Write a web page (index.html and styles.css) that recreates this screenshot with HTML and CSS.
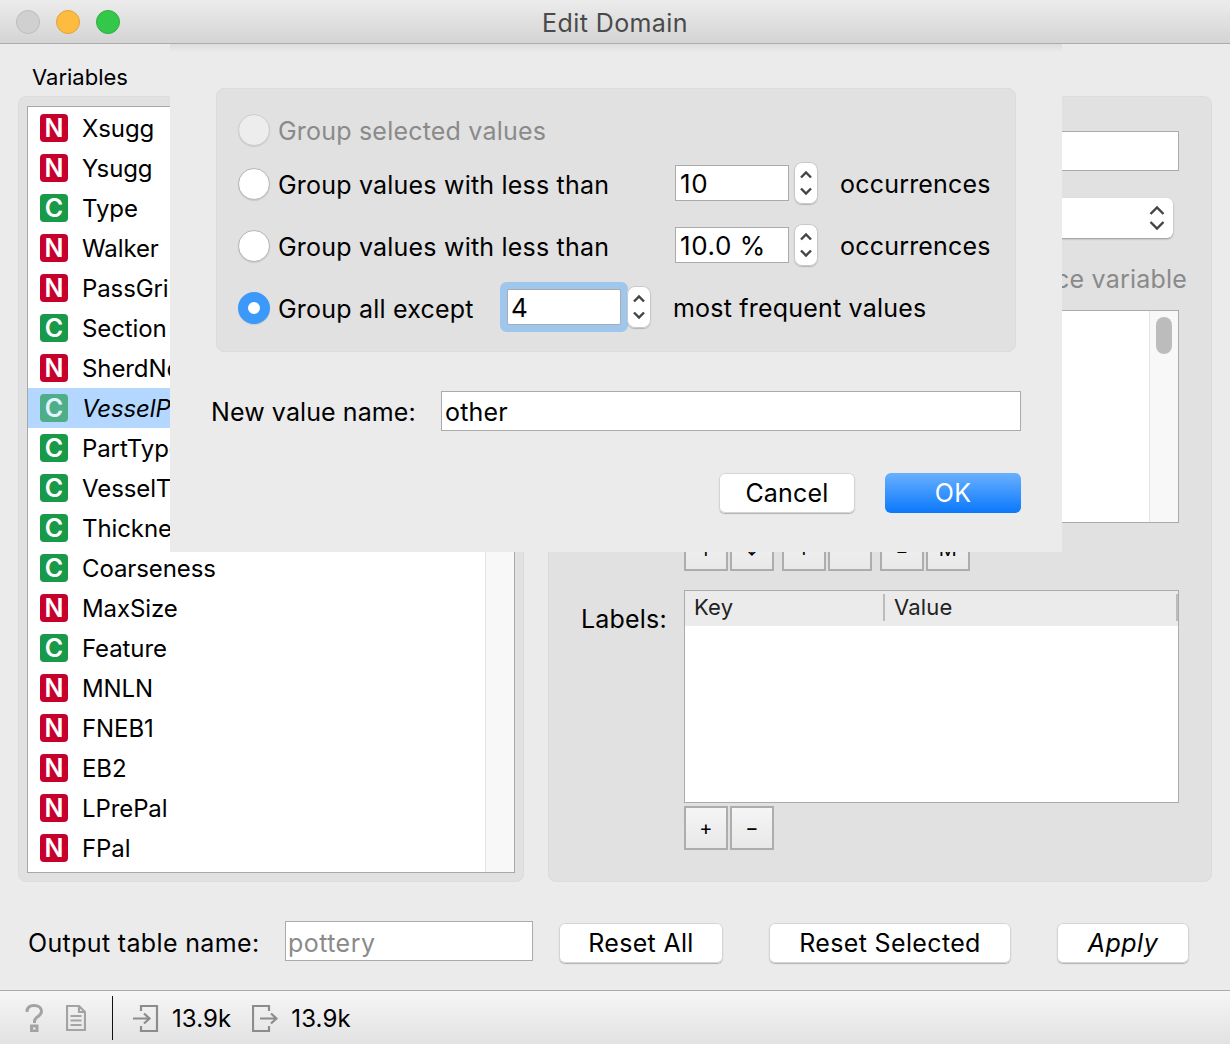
FILE: index.html
```html
<!DOCTYPE html>
<html lang="en">
<head>
  <meta charset="utf-8">
  <title>Edit Domain</title>
  <link rel="stylesheet" href="styles.css">
</head>
<body>
<div class="window">
  <div class="titlebar">
    <div class="lights">
      <span class="light light-off"></span>
      <span class="light light-min"></span>
      <span class="light light-max"></span>
    </div>
    <div class="title">Edit Domain</div>
  </div>

  <div class="main">
    <div class="col-left">
      <div class="col-title">Variables</div>
      <div class="group group-left">
        <div class="varlist">
          <div class="varrows">
            <div class="var"><span class="tag tag-n">N</span>Xsugg</div>
            <div class="var"><span class="tag tag-n">N</span>Ysugg</div>
            <div class="var"><span class="tag tag-c">C</span>Type</div>
            <div class="var"><span class="tag tag-n">N</span>Walker</div>
            <div class="var"><span class="tag tag-n">N</span>PassGrind</div>
            <div class="var"><span class="tag tag-c">C</span>Section</div>
            <div class="var"><span class="tag tag-n">N</span>SherdNo</div>
            <div class="var selected"><span class="tag tag-c">C</span>VesselPart</div>
            <div class="var"><span class="tag tag-c">C</span>PartType</div>
            <div class="var"><span class="tag tag-c">C</span>VesselType</div>
            <div class="var"><span class="tag tag-c">C</span>Thickness</div>
            <div class="var"><span class="tag tag-c">C</span>Coarseness</div>
            <div class="var"><span class="tag tag-n">N</span>MaxSize</div>
            <div class="var"><span class="tag tag-c">C</span>Feature</div>
            <div class="var"><span class="tag tag-n">N</span>MNLN</div>
            <div class="var"><span class="tag tag-n">N</span>FNEB1</div>
            <div class="var"><span class="tag tag-n">N</span>EB2</div>
            <div class="var"><span class="tag tag-n">N</span>LPrePal</div>
            <div class="var"><span class="tag tag-n">N</span>FPal</div>
          </div>
          <div class="scrolltrack"></div>
        </div>
      </div>
    </div>

    <div class="col-right">
      <div class="group group-right">
        <div class="formrow">
          <span>Name:</span>
          <div class="field field-name"></div>
        </div>
        <div class="formrow row-type">
          <span>Type:</span>
          <div class="combo">
            <svg class="combo-arrows" width="16" height="28" viewBox="0 0 16 28"><path d="M1.500 10 8 3.500l6.500 6.500M1.500 18 8 24.500l6.500-6.500"/></svg>
          </div>
        </div>
        <div class="disabled-line">Use source variable</div>
        <div class="formrow">
          <span></span>
          <div class="valuelist">
            <div class="valuelist-track"><span class="thumb"></span></div>
          </div>
        </div>
        <div class="formrow">
          <span></span>
          <div class="toolrow">
            <span class="tool">↑</span><span class="tool">↓</span>
            <span class="tool tool-gap">+</span><span class="tool"></span>
            <span class="tool tool-gap">=</span><span class="tool">M</span>
          </div>
        </div>
        <div class="formrow row-labels">
          <span class="labels-label">Labels:</span>
          <div class="labels-table">
            <div class="labels-head">
              <span class="head-key">Key</span>
              <span class="head-value">Value</span>
            </div>
          </div>
        </div>
        <div class="formrow">
          <span></span>
          <div class="toolrow toolrow-small">
            <span class="tool">+</span><span class="tool">−</span>
          </div>
        </div>
      </div>
    </div>
  </div>

  <div class="bottom">
    <span class="output-label">Output table name:</span>
    <div class="field field-output">pottery</div>
    <div class="btn btn-reset">Reset All</div>
    <div class="btn btn-selected">Reset Selected</div>
    <div class="btn btn-apply">Apply</div>
  </div>

  <div class="statusbar">
    <svg class="status-icon icon-help" width="18" height="28" viewBox="0 0 18 28"><path d="M2 8C2 3.500 5 1.500 9 1.500s7.500 2.200 7.500 5.800c0 2.500-1.500 3.800-3.500 5.200-2 1.300-3.500 2.300-3.500 5v1.500"/><rect x="6.500" y="22" width="5.500" height="5"/></svg>
    <svg class="status-icon icon-doc" width="20" height="26" viewBox="0 0 20 26"><path d="M1 1h12l6 6v18H1zM13 1v6h6M4.500 11h11M4.500 15.500h11M4.500 20h11"/></svg>
    <span class="status-sep"></span>
    <svg class="status-icon icon-in" width="26" height="28" viewBox="0 0 26 28"><path d="M8 7V2h16v25H8v-5M0 14.500h15M11 9.500l5.500 5-5.500 5"/></svg>
    <span class="status-num">13.9k</span>
    <svg class="status-icon icon-out" width="26" height="28" viewBox="0 0 26 28"><path d="M17 7V2H1v25h16v-5M8 14.500h15M19 9.500l5.500 5-5.500 5"/></svg>
    <span class="status-num">13.9k</span>
  </div>

  <div class="sheet">
    <div class="sheet-group">
      <div class="opt opt-first disabled">
        <span class="radio radio-off"></span>
        <span class="opt-label">Group selected values</span>
      </div>
      <div class="opt opt-second">
        <span class="radio"></span>
        <span class="opt-label opt-text">Group values with less than</span>
        <div class="field spinfield">10</div>
        <div class="spin"><svg width="14" height="34" viewBox="0 0 14 34"><path d="M2 11.500 7 6.500l5 5M2 22.500l5 5 5-5"/></svg></div>
        <span class="opt-tail">occurrences</span>
      </div>
      <div class="opt opt-third">
        <span class="radio"></span>
        <span class="opt-label opt-text">Group values with less than</span>
        <div class="field spinfield">10.0 %</div>
        <div class="spin"><svg width="14" height="34" viewBox="0 0 14 34"><path d="M2 11.500 7 6.500l5 5M2 22.500l5 5 5-5"/></svg></div>
        <span class="opt-tail">occurrences</span>
      </div>
      <div class="opt opt-fourth">
        <span class="radio radio-on"></span>
        <span class="opt-label opt-text-short">Group all except</span>
        <div class="field spinfield focused">4</div>
        <div class="spin spin-focused"><svg width="14" height="34" viewBox="0 0 14 34"><path d="M2 11.500 7 6.500l5 5M2 22.500l5 5 5-5"/></svg></div>
        <span class="opt-tail">most frequent values</span>
      </div>
    </div>
    <div class="newname">
      <span class="newname-label">New value name:</span>
      <div class="field field-newname">other</div>
    </div>
    <div class="sheet-buttons">
      <div class="btn btn-cancel">Cancel</div>
      <div class="btn btn-ok">OK</div>
    </div>
  </div>
</div>
</body>
</html>
```

FILE: styles.css
```css
* {
  box-sizing: border-box;
}
html, body {
  margin: 0;
  padding: 0;
}
body {
  font: 25px/1.2 Inter, "Liberation Sans", sans-serif;
  letter-spacing: .2px;
  color: #000;
  background: #ebebeb;
}
.window {
  position: relative;
  width: 1230px;
  height: 1044px;
  overflow: hidden;
  display: flex;
  flex-direction: column;
  background: #ebebeb;
}

/* title bar */
.titlebar {
  flex: none;
  height: 44px;
  display: flex;
  align-items: center;
  position: relative;
  background: linear-gradient(#ececec, #d4d4d4);
  border-bottom: 1px solid #adadad;
  border-radius: 8px 8px 0 0;
}
.lights {
  display: flex;
  gap: 16px;
  padding-left: 16px;
}
.light {
  width: 24px;
  height: 24px;
  border-radius: 50%;
  border: 1px solid #bdbdbd;
}
.light-off {
  background: #d0d0d0;
}
.light-min {
  background: #fdbc40;
  border-color: #e0a23a;
}
.light-max {
  background: #34c84a;
  border-color: #2dac40;
}
.title {
  flex: 1;
  text-align: center;
  margin-left: -120px;
  padding-top: 2px;
  letter-spacing: .4px;
  color: #4a4a4a;
}

/* main columns */
.main {
  flex: none;
  height: 838px;
  display: flex;
  gap: 24px;
  padding-left: 18px;
}
.col-left {
  width: 506px;
}
.col-title {
  height: 52px;
  padding: 20px 0 0 14px;
  font-size: 22px;
  letter-spacing: 0;
}
.group {
  background: #e1e1e1;
  border: 1px solid #dcdcdc;
  border-radius: 8px;
}
.group-left {
  height: 786px;
  padding: 9px 8px;
}
.varlist {
  display: flex;
  height: 767px;
  background: #fff;
  border: 1px solid #a8a8a8;
  overflow: hidden;
}
.varrows {
  flex: 1;
  padding-top: 1px;
}
.var {
  height: 40px;
  display: flex;
  align-items: center;
  padding: 2px 0 0 12px;
  font-size: 24px;
  letter-spacing: -.1px;
}
.var.selected {
  background: #b3d7ff;
  font-style: italic;
}
.var.selected .tag {
  opacity: .65;
  font-style: normal;
}
.tag {
  flex: none;
  width: 28px;
  height: 28px;
  margin: -2px 14px 0 0;
  border-radius: 4px;
  color: #fff;
  font-weight: 600;
  font-size: 25px;
  line-height: 28px;
  text-align: center;
}
.tag-n {
  background: #c6002b;
}
.tag-c {
  background: #19994a;
}
.scrolltrack {
  flex: none;
  width: 29px;
  background: #f8f8f8;
  border-left: 1px solid #e4e4e4;
}

/* right column */
.col-right {
  width: 664px;
  padding-top: 52px;
}
.group-right {
  height: 786px;
  padding: 34px 32px 0;
}
.formrow {
  display: grid;
  grid-template-columns: 103px 1fr;
  align-items: center;
}
.field {
  background: #fff;
  border: 1px solid #ababab;
  height: 40px;
  display: flex;
  align-items: center;
  padding: 2px 0 0 3px;
}
.field-name {
  width: 495px;
}
.row-type {
  margin-top: 27px;
}
.combo {
  width: 489px;
  height: 40px;
  background: #fff;
  border-radius: 6px;
  box-shadow: 0 1px 2px rgba(0, 0, 0, .35);
  display: flex;
  align-items: center;
  justify-content: flex-end;
  padding-right: 8px;
}
.combo-arrows path,
.spin path {
  fill: none;
  stroke: #444;
  stroke-width: 2.4;
}
.disabled-line {
  margin: 26px -8px 0 0;
  height: 30px;
  text-align: right;
  color: #8a8a8a;
}
.valuelist {
  width: 495px;
  height: 213px;
  margin-top: 16px;
  background: #fff;
  border: 1px solid #ababab;
  display: flex;
  justify-content: flex-end;
}
.valuelist-track {
  width: 29px;
  background: #f8f8f8;
  border-left: 1px solid #e4e4e4;
  padding: 6px 0 0 6px;
}
.thumb {
  display: block;
  width: 16px;
  height: 37px;
  border-radius: 8px;
  background: #bcbcbc;
}
.toolrow {
  display: flex;
  gap: 2px;
  margin-top: 4px;
}
.tool {
  width: 44px;
  height: 44px;
  display: flex;
  align-items: center;
  justify-content: center;
  border: 2px solid #adadad;
  background: linear-gradient(#f5f5f5, #e8e8e8);
  font-size: 20px;
}
.tool-gap {
  margin-left: 6px;
}
.row-labels {
  margin-top: 19px;
  align-items: start;
}
.labels-label {
  padding-top: 14px;
}
.labels-table {
  width: 495px;
  height: 213px;
  background: #fff;
  border: 1px solid #ababab;
}
.labels-head {
  height: 35px;
  display: flex;
  align-items: center;
  background: #ebebeb;
  font-size: 22px;
  color: #222;
  padding-bottom: 2px;
}
.head-key {
  width: 200px;
  padding-left: 9px;
  border-right: 2px solid #bcbcbc;
}
.head-value {
  flex: 1;
  padding-left: 9px;
  border-right: 2px solid #bcbcbc;
}
.toolrow-small {
  margin-top: 3px;
}

/* bottom row */
.bottom {
  flex: none;
  height: 108px;
  display: flex;
  align-items: flex-start;
  padding: 39px 0 0 28px;
}
.output-label {
  width: 257px;
  line-height: 44px;
  letter-spacing: .35px;
}
.field-output {
  width: 248px;
  color: #8a8a8a;
  padding: 4px 0 0 2px;
  letter-spacing: .45px;
}
.btn {
  height: 40px;
  display: flex;
  align-items: center;
  justify-content: center;
  background: #fff;
  border-radius: 6px;
  box-shadow: inset 0 0 0 1px #d4d4d4, 0 1px 1px rgba(0, 0, 0, .25);
}
.btn-reset {
  width: 164px;
  margin: 2px 0 0 26px;
  letter-spacing: .3px;
}
.btn-selected {
  width: 242px;
  margin: 2px 0 0 46px;
  letter-spacing: .35px;
}
.btn-apply {
  width: 132px;
  margin: 2px 0 0 46px;
  font-style: italic;
  letter-spacing: .5px;
}

/* status bar */
.statusbar {
  flex: 1;
  display: flex;
  align-items: center;
  padding-left: 25px;
  border-top: 1px solid #a9a9a9;
  background: linear-gradient(#f6f6f6, #e2e2e2);
}
.status-icon {
  flex: none;
}
.status-icon path,
.status-icon rect {
  fill: none;
  stroke: #8c8c8c;
  stroke-width: 2.2;
}
.icon-help path,
.icon-help rect {
  stroke: #a3a3a3;
  stroke-width: 3;
}
.icon-doc path {
  stroke: #a3a3a3;
}
.icon-doc {
  margin-left: 23px;
}
.status-sep {
  width: 1px;
  height: 44px;
  margin: 0 20px 0 26px;
  background: #111;
}
.status-num {
  margin-left: 13px;
  padding-top: 4px;
  font-size: 24px;
  letter-spacing: .1px;
}
.icon-out {
  margin-left: 21px;
}

/* sheet lying over the window */
.sheet {
  position: absolute;
  left: 170px;
  top: 44px;
  width: 892px;
  height: 508px;
  background: linear-gradient(#dcdcdc, #ebebeb 8px);
  padding: 44px 41px 0 46px;
}
.sheet-group {
  width: 800px;
  height: 264px;
  background: #e1e1e1;
  border: 1px solid #dcdcdc;
  border-radius: 8px;
  padding-left: 21px;
}
.opt {
  display: flex;
  align-items: center;
  height: 32px;
}
.opt-first {
  margin-top: 25px;
}
.opt-second {
  margin-top: 22px;
}
.opt-third,
.opt-fourth {
  margin-top: 30px;
}
.opt-label {
  padding-top: 2px;
}
.disabled {
  color: #8a8a8a;
}
.radio {
  flex: none;
  width: 32px;
  height: 32px;
  margin-right: 8px;
  border-radius: 50%;
  background: #fff;
  border: 1px solid #b5b5b5;
  box-shadow: 0 1px 1px rgba(0, 0, 0, .1);
}
.radio-off {
  background: #ededed;
  border-color: #cdcdcd;
}
.radio-on {
  border: 10px solid #3b99fc;
}
.opt-text {
  width: 397px;
}
.opt-text-short {
  width: 229px;
}
.spinfield {
  width: 114px;
  height: 36px;
  flex: none;
  margin-top: -2px;
  padding-left: 4px;
  font-size: 26px;
  letter-spacing: .6px;
}
.focused {
  box-shadow: 0 0 0 7px #9fc6ec;
  border-radius: 2px;
  padding-left: 3px;
}
.spin {
  flex: none;
  width: 24px;
  height: 42px;
  margin: -2px 0 0 5px;
  background: #fff;
  border-radius: 8px;
  box-shadow: inset 0 0 0 1px #c8c8c8, 0 1px 1px rgba(0, 0, 0, .2);
  display: flex;
  align-items: center;
  justify-content: center;
}
.spin-focused {
  margin-left: 6px;
}
.opt-tail {
  margin-left: 22px;
}
.newname {
  display: flex;
  align-items: center;
  margin: 39px 0 0 -5px;
}
.newname-label {
  width: 230px;
  padding-top: 2px;
  letter-spacing: .1px;
}
.field-newname {
  width: 580px;
}
.sheet-buttons {
  display: flex;
  gap: 30px;
  justify-content: flex-end;
  margin-top: 42px;
}
.btn-cancel {
  width: 136px;
}
.btn-ok {
  width: 136px;
  color: #fff;
  background: linear-gradient(#69b0ff, #0a78fb);
  box-shadow: none;
}
```
